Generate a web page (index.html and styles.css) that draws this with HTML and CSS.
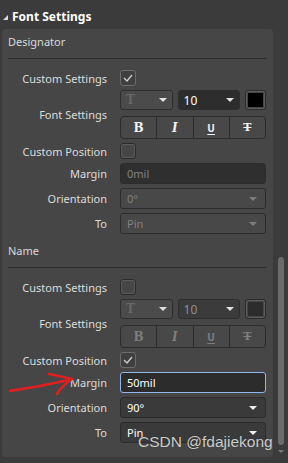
FILE: index.html
```html
<!DOCTYPE html>
<html>
<head>
<meta charset="utf-8">
<link rel="stylesheet" href="styles.css">
</head>
<body>
<div class="prop-head"><span class="prop-tri"></span>Font Settings</div>
<div class="prop-wrap">
  <div class="prop-panel">

    <div class="prop-section first">
      <div class="prop-title">Designator</div>
      <div class="prop-rows">
        <div class="prop-label">Custom Settings</div>
        <div class="prop-ctrl"><span class="chk on"><svg width="10" height="8" viewBox="0 0 10 8"><path d="M1 4 L4 7 L9 1" fill="none" stroke="#d0d0d0" stroke-width="1.3"/></svg></span></div>

        <div class="prop-label">Font Settings</div>
        <div class="prop-ctrl font-ctrl">
          <div class="font-line">
            <div class="dd dd-font"><span class="t-glyph">T</span><span class="caret"></span></div>
            <div class="dd dd-size on"><span>10</span><span class="caret"></span></div>
            <div class="swatch"><span class="swatch-in"></span></div>
          </div>
          <div class="btn-group on">
            <span class="fb b">B</span><span class="fb i">I</span><span class="fb u">U</span><span class="fb s">T</span>
          </div>
        </div>

        <div class="prop-label">Custom Position</div>
        <div class="prop-ctrl"><span class="chk"></span></div>

        <div class="prop-label">Margin</div>
        <div class="prop-ctrl"><div class="inp">0mil</div></div>

        <div class="prop-label">Orientation</div>
        <div class="prop-ctrl"><div class="sel">0°<span class="caret"></span></div></div>

        <div class="prop-label">To</div>
        <div class="prop-ctrl"><div class="sel">Pin<span class="caret"></span></div></div>
      </div>
    </div>

    <div class="prop-section">
      <div class="prop-title">Name</div>
      <div class="prop-rows">
        <div class="prop-label">Custom Settings</div>
        <div class="prop-ctrl"><span class="chk"></span></div>

        <div class="prop-label">Font Settings</div>
        <div class="prop-ctrl font-ctrl">
          <div class="font-line">
            <div class="dd dd-font"><span class="t-glyph">T</span><span class="caret"></span></div>
            <div class="dd dd-size"><span>10</span><span class="caret"></span></div>
            <div class="swatch off"><span class="swatch-in"></span></div>
          </div>
          <div class="btn-group">
            <span class="fb b">B</span><span class="fb i">I</span><span class="fb u">U</span><span class="fb s">T</span>
          </div>
        </div>

        <div class="prop-label">Custom Position</div>
        <div class="prop-ctrl"><span class="chk on"><svg width="10" height="8" viewBox="0 0 10 8"><path d="M1 4 L4 7 L9 1" fill="none" stroke="#d0d0d0" stroke-width="1.3"/></svg></span></div>

        <div class="prop-label">Margin</div>
        <div class="prop-ctrl"><div class="inp focus">50mil</div></div>

        <div class="prop-label">Orientation</div>
        <div class="prop-ctrl"><div class="sel on">90°<span class="caret"></span></div></div>

        <div class="prop-label">To</div>
        <div class="prop-ctrl"><div class="sel on">Pin<span class="caret"></span></div></div>
      </div>
    </div>

  </div>
  <div class="prop-scroll">
    <div class="thumb"></div>
    <span class="down"></span>
  </div>
</div>

<svg class="red-arrow" width="72" height="30" viewBox="0 0 72 30">
  <path d="M2 20 C 20 17, 42 14, 64 8" fill="none" stroke="#e02020" stroke-width="2.6" stroke-linecap="round"/>
  <path d="M41 3 C 50 5, 58 6, 64 8 C 58 12, 52 18, 49 23" fill="none" stroke="#e02020" stroke-width="2.6" stroke-linecap="round" stroke-linejoin="round"/>
</svg>
<div class="watermark">CSDN @fdajiekong</div>
</body>
</html>
```

FILE: styles.css
```css
body {
  margin: 0;
  width: 288px;
  height: 463px;
  overflow: hidden;
  background-color: #3b3b3b;
  font-family: "Noto Sans", "Open Sans", sans-serif;
  font-size: 11px;
  color: #dcdcdc;
  position: relative;
}

.prop-head {
  height: 29px;
  display: flex;
  align-items: center;
  padding: 3px 0 0 3px;
  box-sizing: border-box;
  font-weight: bold;
  font-size: 12px;
  color: #fff;
}
.prop-tri {
  width: 0;
  height: 0;
  border-left: 5px solid transparent;
  border-bottom: 5px solid #d8d8d8;
  margin: 2px 4px 0 0;
}

.prop-wrap {
  display: flex;
  align-items: flex-start;
}
.prop-panel {
  width: 271px;
  margin-left: 2px;
  box-sizing: border-box;
  padding: 0 7px 14px 6px;
  background-color: #464646;
  border-radius: 4px;
}
.prop-scroll {
  width: 15px;
  height: 434px;
  display: flex;
  flex-direction: column;
  align-items: center;
  padding-top: 228px;
  box-sizing: border-box;
}
.thumb {
  width: 6px;
  height: 188px;
  margin-left: 1px;
  border-radius: 3px;
  background-color: #6b6b6b;
}
.down {
  margin: 5px 0 0 1px;
  width: 0;
  height: 0;
  border-left: 3px solid transparent;
  border-right: 3px solid transparent;
  border-top: 3px solid #7a7a7a;
}

.prop-section {
  padding-top: 9px;
}
.prop-section.first {
  padding-top: 5px;
}
.prop-title {
  height: 16px;
  line-height: 16px;
  padding-bottom: 8px;
  border-bottom: 1px solid #2c2c2c;
  margin-bottom: 11px;
  color: #dadada;
}

.prop-rows {
  display: grid;
  grid-template-columns: 99px 146px;
  column-gap: 13px;
  row-gap: 4px;
  align-items: center;
}
.prop-label {
  text-align: right;
  line-height: 15px;
}
.prop-ctrl {
  display: flex;
}

.chk {
  width: 14px;
  height: 14px;
  border: 1px solid #2c2c2c;
  box-shadow: inset 0 0 0 1px #5a5a5a;
  border-radius: 3px;
  background-color: #474747;
  display: flex;
  align-items: center;
  justify-content: center;
}
.chk.on {
  background-color: #3f3f3f;
  border-color: #6c6c6c;
  box-shadow: none;
}

.font-ctrl {
  flex-direction: column;
  gap: 6px;
}
.font-line {
  display: flex;
  gap: 5px;
  height: 20px;
}
.dd {
  box-sizing: border-box;
  height: 20px;
  border: 1px solid #2e2e2e;
  border-radius: 3px;
  display: flex;
  align-items: center;
  justify-content: space-between;
  padding: 0 5px 0 5px;
}
.dd-font {
  width: 53px;
  background-color: #4b4b4b;
}
.t-glyph {
  font-family: "DejaVu Serif", serif;
  font-weight: bold;
  font-size: 12px;
  color: #676767;
}
.dd-size {
  width: 63px;
  background-color: #3b3b3b;
  color: #909090;
  font-size: 12px;
}
.dd-size.on {
  background-color: #2d2d2d;
  color: #fff;
}
.caret {
  width: 0;
  height: 0;
  border-left: 4px solid transparent;
  border-right: 4px solid transparent;
  border-top: 4px solid #e0e0e0;
}
.swatch {
  box-sizing: border-box;
  width: 21px;
  height: 20px;
  border: 1px solid #2c2c2c;
  box-shadow: inset 0 0 0 1px #5c5c5c;
  border-radius: 3px;
  padding: 2px;
  display: flex;
}
.swatch-in {
  flex: 1;
  background-color: #000;
}
.swatch.off .swatch-in {
  background-color: #2c2c2c;
}

.btn-group {
  box-sizing: border-box;
  height: 23px;
  border: 1px solid #2c2c2c;
  border-radius: 4px;
  background-color: #484848;
  display: flex;
}
.fb {
  flex: 1;
  display: flex;
  align-items: center;
  justify-content: center;
  font-family: "DejaVu Serif", serif;
  font-weight: bold;
  font-size: 12px;
  color: #7e7e7e;
  border-left: 1px solid #2c2c2c;
}
.fb:first-child {
  border-left: none;
}
.btn-group.on .fb {
  color: #f2f2f2;
}
.fb.i {
  font-style: italic;
}
.fb.u {
  font-family: "Noto Sans", sans-serif;
  font-size: 10px;
  text-decoration: underline;
  text-underline-offset: 2px;
}
.fb.s {
  font-size: 11px;
  text-decoration: line-through;
}

.inp,
.sel {
  box-sizing: border-box;
  width: 146px;
  height: 21px;
  border: 1px solid #2c2c2c;
  border-radius: 3px;
  display: flex;
  align-items: center;
  justify-content: space-between;
  padding: 0 8px 0 6px;
  color: #818181;
}
.inp {
  background-color: #2f2f2f;
}
.inp.focus {
  border-color: #8fb8e6;
  background-color: #2c2c2c;
  color: #fff;
}
.sel {
  background-color: #484848;
}
.sel .caret {
  border-top-color: #7c7c7c;
}
.sel.on {
  background-color: #3a3a3a;
  color: #fff;
}
.sel.on .caret {
  border-top-color: #f0f0f0;
}

.red-arrow {
  position: absolute;
  left: 8px;
  top: 371px;
}
.watermark {
  position: absolute;
  left: 138px;
  top: 433px;
  font-family: "Liberation Sans", sans-serif;
  font-size: 15.5px;
  color: rgba(235, 235, 235, 0.85);
  text-shadow: 0 0 1px rgba(0, 0, 0, 0.4);
  white-space: nowrap;
}
```
